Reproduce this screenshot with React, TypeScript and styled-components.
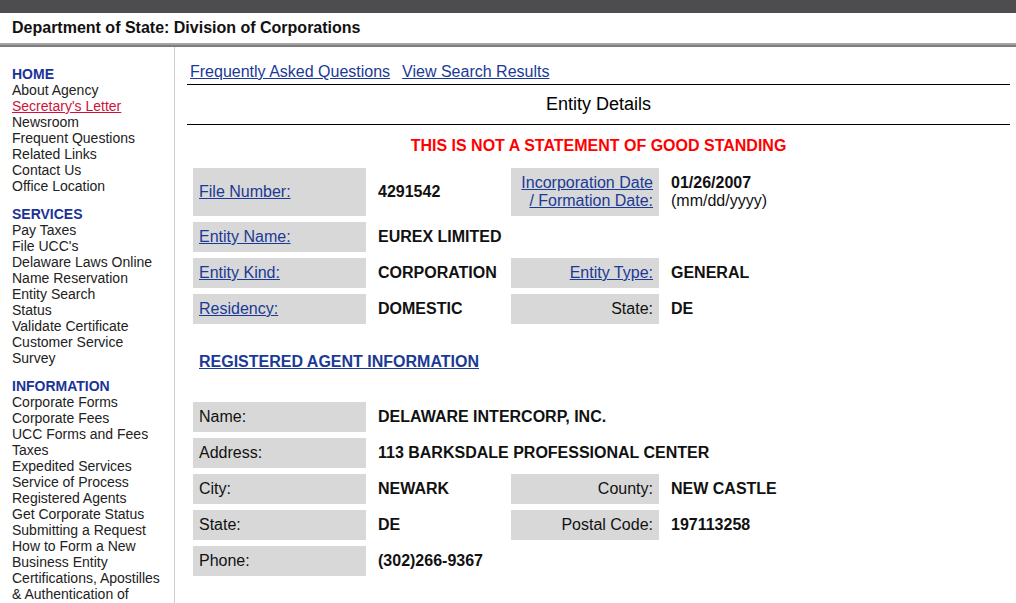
import React from "react";
import styled, { createGlobalStyle } from "styled-components";

const Global = createGlobalStyle`
  html, body { margin: 0; padding: 0; background: #fff; }
  body { font-family: "Liberation Sans", Arial, sans-serif; color: #000; }
  a { color: #1a3a96; }
`;

const Page = styled.div`
  width: 1016px;
  height: 603px;
  overflow: hidden;
  display: flex;
  flex-direction: column;
`;

const TopBar = styled.div`
  height: 13px;
  flex-shrink: 0;
  background: #4d4d4f;
`;

const TitleBar = styled.div`
  height: 30px;
  flex-shrink: 0;
  display: flex;
  align-items: center;
  padding-left: 12px;
  font-size: 16px;
  font-weight: bold;
  color: #111;
`;

const Rule = styled.div`
  height: 2px;
  flex-shrink: 0;
  background: #a3a3a3;
  border-bottom: 2px solid #7d7d7d;
`;

const Body = styled.div`
  flex: 1 0 auto;
  display: flex;
`;

const Sidebar = styled.nav`
  width: 175px;
  border-right: 1px solid #cfcfcf;
  padding: 19px 0 0 12px;
  box-sizing: border-box;
  flex-shrink: 0;
`;

const NavSection = styled.div`
  display: flex;
  flex-direction: column;
  margin-bottom: 12px;
`;

const NavHead = styled.div`
  font-size: 14px;
  line-height: 16px;
  font-weight: bold;
  color: #1a3399;
`;

const NavItem = styled.a<{ $active?: boolean }>`
  font-size: 14px;
  line-height: 16px;
  color: ${(p) => (p.$active ? "#d0103a" : "#222")};
  text-decoration: ${(p) => (p.$active ? "underline" : "none")};
  white-space: nowrap;
`;

const Main = styled.main`
  flex: 1;
  padding: 16px 6px 0 12px;
  display: flex;
  flex-direction: column;
`;

const TopLinks = styled.div`
  display: flex;
  gap: 12px;
  padding: 0 0 3px 3px;
  border-bottom: 1px solid #000;
  font-size: 16px;
  line-height: 18px;
`;

const TopLink = styled.a`
  color: #1a3a96;
  text-decoration: underline;
`;

const Heading = styled.div`
  height: 39px;
  display: flex;
  align-items: center;
  justify-content: center;
  font-size: 18px;
  border-bottom: 1px solid #000;
`;

const Warning = styled.div`
  text-align: center;
  color: #ff0000;
  font-weight: bold;
  font-size: 16px;
  line-height: 18px;
  padding: 12px 0 0;
`;

const Grid = styled.div<{ $top: number }>`
  display: grid;
  grid-template-columns: 173px 133px 148px 1fr;
  gap: 6px;
  margin: ${(p) => p.$top}px 0 0 6px;
`;

const Label = styled.div<{ $right?: boolean }>`
  background: #d8d8d8;
  padding: 6px;
  font-size: 16px;
  line-height: 18px;
  color: #111;
  display: flex;
  flex-direction: column;
  justify-content: center;
  text-align: ${(p) => (p.$right ? "right" : "left")};
`;

const LabelLink = styled.a`
  color: #1a3a96;
  text-decoration: underline;
`;

const Value = styled.div<{ $span?: number }>`
  padding: 6px;
  font-size: 16px;
  line-height: 18px;
  font-weight: bold;
  color: #111;
  display: flex;
  flex-direction: column;
  justify-content: center;
  grid-column: span ${(p) => p.$span || 1};
  white-space: nowrap;
`;

const Sub = styled.span`
  font-weight: normal;
`;

const SectionTitle = styled.a`
  display: inline-block;
  margin: 29px 0 0 12px;
  font-size: 16px;
  line-height: 18px;
  font-weight: bold;
  color: #1a3a96;
  text-decoration: underline;
`;

const nav = [
  {
    head: "HOME",
    items: ["About Agency", "Secretary's Letter", "Newsroom", "Frequent Questions", "Related Links", "Contact Us", "Office Location"],
  },
  {
    head: "SERVICES",
    items: ["Pay Taxes", "File UCC's", "Delaware Laws Online", "Name Reservation", "Entity Search", "Status", "Validate Certificate", "Customer Service", "Survey"],
  },
  {
    head: "INFORMATION",
    items: [
      "Corporate Forms",
      "Corporate Fees",
      "UCC Forms and Fees",
      "Taxes",
      "Expedited Services",
      "Service of Process",
      "Registered Agents",
      "Get Corporate Status",
      "Submitting a Request",
      "How to Form a New",
      "Business Entity",
      "Certifications, Apostilles",
      "& Authentication of",
    ],
  },
];

export default function App() {
  return (
    <Page>
      <Global />
      <TopBar />
      <TitleBar>Department of State: Division of Corporations</TitleBar>
      <Rule />
      <Body>
        <Sidebar>
          {nav.map((s) => (
            <NavSection key={s.head}>
              <NavHead>{s.head}</NavHead>
              {s.items.map((i) => (
                <NavItem key={i} href="#" $active={i === "Secretary's Letter"}>
                  {i}
                </NavItem>
              ))}
            </NavSection>
          ))}
        </Sidebar>
        <Main>
          <TopLinks>
            <TopLink href="#">Frequently Asked Questions</TopLink>
            <TopLink href="#">View Search Results</TopLink>
          </TopLinks>
          <Heading>Entity Details</Heading>
          <Warning>THIS IS NOT A STATEMENT OF GOOD STANDING</Warning>
          <Grid $top={13}>
            <Label>
              <div>
                <LabelLink href="#">File Number:</LabelLink>
              </div>
            </Label>
            <Value>4291542</Value>
            <Label $right>
              <div>
                <LabelLink href="#">
                  Incorporation Date
                  <br />/ Formation Date:
                </LabelLink>
              </div>
            </Label>
            <Value>
              <span>01/26/2007</span>
              <Sub>(mm/dd/yyyy)</Sub>
            </Value>

            <Label>
              <div>
                <LabelLink href="#">Entity Name:</LabelLink>
              </div>
            </Label>
            <Value $span={3}>EUREX LIMITED</Value>

            <Label>
              <div>
                <LabelLink href="#">Entity Kind:</LabelLink>
              </div>
            </Label>
            <Value>CORPORATION</Value>
            <Label $right>
              <div>
                <LabelLink href="#">Entity Type:</LabelLink>
              </div>
            </Label>
            <Value>GENERAL</Value>

            <Label>
              <div>
                <LabelLink href="#">Residency:</LabelLink>
              </div>
            </Label>
            <Value>DOMESTIC</Value>
            <Label $right>State:</Label>
            <Value>DE</Value>
          </Grid>
          <div>
            <SectionTitle href="#">REGISTERED AGENT INFORMATION</SectionTitle>
          </div>
          <Grid $top={31}>
            <Label>Name:</Label>
            <Value $span={3}>DELAWARE INTERCORP, INC.</Value>
            <Label>Address:</Label>
            <Value $span={3}>113 BARKSDALE PROFESSIONAL CENTER</Value>
            <Label>City:</Label>
            <Value>NEWARK</Value>
            <Label $right>County:</Label>
            <Value>NEW CASTLE</Value>
            <Label>State:</Label>
            <Value>DE</Value>
            <Label $right>Postal Code:</Label>
            <Value>197113258</Value>
            <Label>Phone:</Label>
            <Value $span={3}>(302)266-9367</Value>
          </Grid>
        </Main>
      </Body>
    </Page>
  );
}
